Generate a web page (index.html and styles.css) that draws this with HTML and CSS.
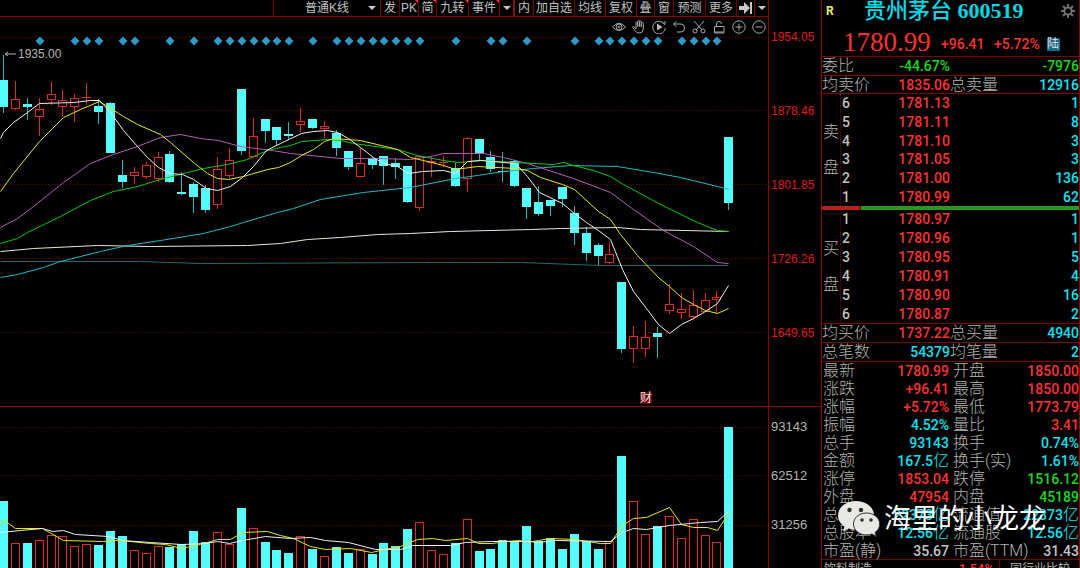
FILE: index.html
```html
<!DOCTYPE html>
<html lang="zh-CN">
<head>
<meta charset="utf-8">
<title>贵州茅台 600519</title>
<link rel="stylesheet" href="styles.css">
</head>
<body>
<div class="app">
  <main class="charts">
    <nav class="toolbar" aria-label="图表工具">
      <label class="period">
        <select aria-label="K线类型"><option>普通K线</option></select>
        <svg class="caret" viewBox="0 0 8 4"><path d="M0 0h8L4 4z"/></svg>
      </label>
      <button>发</button>
      <button class="hot">PK</button>
      <button class="hot">简</button>
      <button class="hot">九转</button>
      <button class="hot">事件</button>
      <button aria-label="更多事件"><svg class="caret" viewBox="0 0 8 4"><path d="M0 0h8L4 4z"/></svg></button>
      <button class="thick">内</button>
      <button>加自选</button>
      <button>均线</button>
      <button>复权</button>
      <button>叠</button>
      <button>窗</button>
      <button>预测</button>
      <button>更多</button>
      <button aria-label="移到最后"><svg class="skip" viewBox="0 0 13 12"><path d="M0 4h5V0l6 6-6 6V8H0zM11 0h2v12h-2z"/></svg></button>
      <button aria-label="展开"><svg class="caret" viewBox="0 0 8 4"><path d="M0 0h8L4 4z"/></svg></button>
    </nav>
    <div class="corner"></div>

    <section class="plot price-plot">
      <svg id="price" class="canvas" viewBox="0 17 768 389" preserveAspectRatio="none" role="img" aria-label="日K线图"></svg>
      <div class="tools">
        <button aria-label="显示"><svg viewBox="0 0 14 14"><path d="M.5 7Q7-.5 13.500 7 7 14 .5 7z"/><circle cx="7" cy="7" r="3"/><circle cx="7" cy="7" r="1"/></svg></button>
        <button aria-label="拖动"><svg viewBox="0 0 14 14"><path d="M4 9V3q0-1 .8-1t.9 1v3.500V1.500q0-1 .9-1t.9 1v5V2q0-1 .9-1t.9 1v5V3.500q0-1 1-1t1 1V9q0 4-4 4-3 0-4-2L.8 7.500Q.5 6.500 1.500 6.500T4 9z"/></svg></button>
        <button aria-label="播放"><svg viewBox="0 0 14 14"><path d="M12.500 4.500A6.300 6.300 0 1 0 13.300 8M10 2l3 2.500V1"/><path class="solid" d="M5 3.500 10.500 7 5 10.500z"/></svg></button>
        <button aria-label="撤销"><svg viewBox="0 0 14 14"><path d="M4.500 1.500 1.500 4l3 3M1.500 4H9q3.500 0 3.500 4T9 12H5"/></svg></button>
        <button aria-label="剪切"><svg viewBox="0 0 14 14"><path d="M2 1l8 9M12 1 4 10"/><circle cx="3" cy="11" r="2"/><circle cx="11" cy="11" r="2"/></svg></button>
        <button aria-label="解锁"><svg viewBox="0 0 14 14"><path d="M2.500 6.500h9.500V13H2.500zM4.500 6.500V4q0-2.500 2.500-2.500T9.500 4M2.500 12h9"/></svg></button>
        <button aria-label="放大"><svg viewBox="0 0 14 14"><circle cx="7" cy="7" r="6.200"/><path d="M3.500 7h7M7 3.500v7"/></svg></button>
        <button aria-label="缩小"><svg viewBox="0 0 14 14"><circle cx="7" cy="7" r="6.200"/><path d="M3.500 7h7"/></svg></button>
      </div>
      <div class="peak"><svg viewBox="0 0 12 6"><path d="M1 3h11M4 1 1 3l3 2"/></svg><span>1935.00</span></div>
      <div class="report">财</div>
    </section>
    <div class="axis price-axis">
      <span>1954.05</span><span>1878.46</span><span>1801.85</span><span>1726.26</span><span>1649.65</span>
    </div>

    <section class="plot">
      <svg id="volume" class="canvas" viewBox="0 407 768 161" preserveAspectRatio="none" role="img" aria-label="成交量"></svg>
    </section>
    <div class="axis volume-axis"><span>93143</span><span>62512</span><span>31256</span></div>
  </main>

  <aside class="quote">
    <header class="head">
      <div class="name">
        <b class="mark">R</b>
        <h1>贵州茅台 <span>600519</span></h1>
        <button aria-label="设置"><svg viewBox="0 0 14 14"><circle cx="7" cy="7" r="3.600"/><path d="M7 0v3M7 11v3M0 7h3M11 7h3M2 2l2.200 2.200M9.800 9.800 12 12M12 2 9.800 4.200M4.200 9.800 2 12"/></svg></button>
      </div>
      <div class="last"><strong>1780.99</strong><span>+96.41</span><span>+5.72%</span><i>陆</i></div>
    </header>
    <dl class="line"><dt>委比</dt><dd class="green">-44.67%</dd><dt></dt><dd class="green">-7976</dd></dl>
    <dl class="line"><dt>均卖价</dt><dd class="red">1835.06</dd><dt>总卖量</dt><dd class="cyan">12916</dd></dl>
    <div class="book">
      <div class="side"><span>卖</span><span>盘</span></div>
      <table>
        <tr><th>6</th><td>1781.13</td><td>1</td></tr>
        <tr><th>5</th><td>1781.11</td><td>8</td></tr>
        <tr><th>4</th><td>1781.10</td><td>3</td></tr>
        <tr><th>3</th><td>1781.05</td><td>3</td></tr>
        <tr><th>2</th><td>1781.00</td><td>136</td></tr>
        <tr><th>1</th><td>1780.99</td><td>62</td></tr>
      </table>
    </div>
    <div class="ratio"><span></span></div>
    <div class="book">
      <div class="side"><span>买</span><span>盘</span></div>
      <table>
        <tr><th>1</th><td>1780.97</td><td>1</td></tr>
        <tr><th>2</th><td>1780.96</td><td>1</td></tr>
        <tr><th>3</th><td>1780.95</td><td>5</td></tr>
        <tr><th>4</th><td>1780.91</td><td>4</td></tr>
        <tr><th>5</th><td>1780.90</td><td>16</td></tr>
        <tr><th>6</th><td>1780.87</td><td>2</td></tr>
      </table>
    </div>
    <dl class="line"><dt>均买价</dt><dd class="red">1737.22</dd><dt>总买量</dt><dd class="cyan">4940</dd></dl>
    <dl class="line"><dt>总笔数</dt><dd class="cyan">54379</dd><dt>均笔量</dt><dd class="cyan">2</dd></dl>
    <div class="stats-wrap">
      <dl class="stats">
        <dt>最新</dt><dd class="red">1780.99</dd><dt>开盘</dt><dd class="red">1850.00</dd>
        <dt>涨跌</dt><dd class="red">+96.41</dd><dt>最高</dt><dd class="red">1850.00</dd>
        <dt>涨幅</dt><dd class="red">+5.72%</dd><dt>最低</dt><dd class="red">1773.79</dd>
        <dt>振幅</dt><dd class="cyan">4.52%</dd><dt>量比</dt><dd class="red">3.41</dd>
        <dt>总手</dt><dd class="cyan">93143</dd><dt>换手</dt><dd class="cyan">0.74%</dd>
        <dt>金额</dt><dd class="cyan">167.5<small>亿</small></dd><dt>换手(实)</dt><dd class="cyan">1.61%</dd>
        <dt>涨停</dt><dd class="red">1853.04</dd><dt>跌停</dt><dd class="green">1516.12</dd>
        <dt>外盘</dt><dd class="red">47954</dd><dt>内盘</dt><dd class="green">45189</dd>
        <dt>总市值</dt><dd class="cyan">22373<small>亿</small></dd><dt>流通值</dt><dd class="cyan">22373<small>亿</small></dd>
        <dt>总股本</dt><dd class="cyan">12.56<small>亿</small></dd><dt>流通股</dt><dd class="cyan">12.56<small>亿</small></dd>
        <dt>市盈(静)</dt><dd>35.67</dd><dt>市盈(TTM)</dt><dd>31.43</dd>
      </dl>
      <div class="watermark">
        <svg viewBox="0 0 42 36">
          <path class="bubble" d="M18 0C8 0 0 6.500 0 14.500c0 4.500 2.500 8.300 6.500 11L5 30.500l5.500-3q3.500 1.300 7.500 1.300c10 0 18-6 18-14.300S28 0 18 0z"/>
          <path class="bubble front" d="M28.500 12C21 12 15.500 17 15.500 23s5.500 11 13 11q3 0 5.500-1l4.200 2.500-1.200-4c3-2 4.700-5 4.700-8.500 0-6-5.700-11-13.200-11z"/>
          <g class="eyes"><circle cx="11.500" cy="9" r="2.200"/><circle cx="23" cy="9" r="2.200"/><circle cx="24" cy="19" r="1.800"/><circle cx="33" cy="19" r="1.800"/></g>
        </svg>
        <span>海里的小龙龙</span>
      </div>
    </div>
    <footer class="sector"><a href="#sector">饮料制造</a><span class="red">1.54%</span><a href="#peers">同行业比较</a></footer>
  </aside>
</div>
<script src="chart.js"></script>
</body>
</html>
```

FILE: styles.css
```css
* { box-sizing: border-box; }
body {
  margin: 0;
  background: #000;
  color: #b4b4ae;
  font-family: "Liberation Sans", "Noto Sans CJK SC", sans-serif;
  font-size: 12px;
}
button, select {
  margin: 0;
  padding: 0;
  border: 0;
  background: none;
  color: inherit;
  font: inherit;
}
.app {
  display: grid;
  grid-template-columns: minmax(0, 1fr) 259px;
  height: 100vh;
  overflow: hidden;
}
.charts {
  display: grid;
  grid-template-columns: minmax(0, 1fr) 53px;
  grid-template-rows: 17px minmax(0, 1fr) 162px;
}
.toolbar {
  display: grid;
  grid-template-columns: 107px 19px 19px 18px 32px 31px 14px 20px 41px 31px 31px 18px 19px 32px 31px 18px 14px;
  justify-content: end;
  border-bottom: 1px solid #8c0000;
  color: #c0c0c0;
  line-height: 14px;
}
.toolbar button, .period {
  position: relative;
  display: flex;
  align-items: center;
  justify-content: center;
  border-left: 1px solid #6e0000;
  overflow: hidden;
}
.toolbar .thick { border-left: 2px solid #8c1010; }
.period { gap: 17px; justify-content: flex-end; padding-right: 4px; }
.period select { appearance: none; width: 46px; }
.hot::after {
  content: "";
  position: absolute;
  top: 0;
  right: 0;
  border-top: 3px solid #ff3030;
  border-left: 3px solid transparent;
}
.caret { width: 8px; height: 4px; fill: #c8c8c8; }
.skip { width: 13px; height: 12px; fill: #c8c8c8; }
.corner, .axis { border-left: 1px solid #8c0000; }
.plot { position: relative; min-height: 0; min-width: 0; }
.canvas { display: block; width: 100%; height: 100%; }
.axis {
  display: flex;
  flex-direction: column;
  padding-left: 2px;
  line-height: 14px;
}
.price-axis { gap: 60px; padding-top: 13px; color: #e01818; }
.volume-axis {
  gap: 35px;
  padding-top: 13px;
  border-top: 1px solid #8c0000;
  font-size: 13px;
}
.price-plot + .axis + .plot { border-top: 1px solid #8c0000; }
.tools {
  position: absolute;
  top: 3px;
  right: 2px;
  display: flex;
  gap: 6px;
}
.tools svg { display: block; width: 14px; height: 14px; fill: none; stroke: #a8a8a8; }
.tools .solid { fill: #b8b8b8; stroke: none; }
.peak {
  position: absolute;
  top: 30px;
  left: 4px;
  display: flex;
  align-items: center;
  gap: 2px;
  line-height: 14px;
}
.peak svg { width: 12px; height: 6px; fill: none; stroke: #b4b4ae; }
.report {
  position: absolute;
  right: 116px;
  bottom: 2px;
  width: 12px;
  height: 12px;
  background: #700000;
  color: #e8e8e8;
  line-height: 12px;
}

/* candles and averages */
.canvas * { vector-effect: non-scaling-stroke; }
.grid { stroke: #780000; stroke-dasharray: 1 2; shape-rendering: crispEdges; }
.up { fill: none; stroke: #e02828; shape-rendering: crispEdges; }
.down { fill: #54fcfc; stroke: none; shape-rendering: crispEdges; }
.wick { fill: #28b4b8; }
.diamond { fill: #2c98c4; }
.ma { fill: none; stroke-width: 1; }
.ma.white { stroke: #f0f0f0; }
.ma.yellow { stroke: #e8e800; }
.ma.purple { stroke: #b858b8; }
.ma.green { stroke: #00cc00; }
.ma.teal { stroke: #18bcc8; }
.ma.ivory { stroke: #e8e8d8; }
.ma.deep { stroke: #246870; }

/* quote panel */
.quote {
  display: grid;
  grid-template-columns: minmax(0, 1fr);
  grid-template-rows: 56px 19px 18px 113px 4px 113px 19px 19px 198px 1fr;
  border-left: 1px solid #8c0000;
  border-right: 1px solid #8c0000;
  font-family: Roboto, "Noto Sans CJK SC", sans-serif;
  font-size: 14px;
  font-weight: 500;
  min-height: 0;
}
.name { display: grid; grid-template-columns: 16px 1fr 16px; line-height: 22px; height: 28px; padding: 0 2px; }
.name button { align-self: start; padding-top: 4px; }
.name .mark { color: #e8f060; font-size: 12px; padding-left: 2px; }
.name h1 {
  margin: 0;
  padding-left: 24px;
  color: #00d8e8;
  font: 500 22px/22px "Liberation Serif", "Noto Sans CJK SC", serif;
  white-space: nowrap;
}
.name h1 span { font-weight: 700; }
.name svg { display: block; width: 14px; height: 14px; fill: none; stroke: #707070; stroke-width: 2; }
.last { display: flex; align-items: center; height: 28px; color: #ff3030; padding-left: 21px; }
.last strong { font: 400 27px/28px "Liberation Serif", serif; width: 98px; }
.last span { width: 53px; padding-top: 4px; }
.last i {
  width: 13px;
  height: 13px;
  margin-top: 4px;
  background: #186888;
  color: #e0e0e0;
  font-size: 12px;
  font-style: normal;
  font-weight: 400;
  line-height: 13px;
}
dl { margin: 0; }
dt { font-size: 16px; font-weight: 300; white-space: nowrap; }
dd { margin: 0; text-align: right; color: #c4c4c4; white-space: nowrap; }
small { font-size: 16px; font-weight: 300; }
.red { color: #ff3030; }
.green { color: #18d818; }
.cyan { color: #10e0f0; }
.line {
  display: grid;
  grid-template-columns: 50px 78px 50px 1fr;
  border-top: 1px solid #780000;
  line-height: 18px;
}
.book { display: grid; grid-template-columns: 19px 1fr; border-top: 1px solid #780000; min-height: 0; }
.ratio + .book { border-top: 0; }
.side {
  display: flex;
  flex-direction: column;
  align-items: center;
  justify-content: center;
  gap: 18px;
  border-right: 1px dotted #780000;
  font-size: 16px;
  font-weight: 300;
  line-height: 18px;
}
.book table { width: 100%; height: 100%; border-collapse: collapse; table-layout: fixed; }
.book th, .book td { padding: 0; line-height: 16px; text-align: right; font-weight: 500; }
.book th { width: 14px; padding-left: 1px; text-align: left; color: #c0c0b8; }
.book td { color: #10e0f0; }
.book th + td { width: 95px; color: #ff3030; }
.ratio { background: #289820; }
.ratio span { display: block; width: 15%; height: 4px; background: #b82020; border-right: 1px solid #500; }
.stats-wrap { position: relative; border-top: 1px solid #780000; }
.stats {
  display: grid;
  grid-template-columns: 50px 76px 64px 1fr;
  grid-auto-rows: 18px;
  line-height: 18px;
  padding-left: 1px;
}
.stats dt:nth-of-type(even) { padding-left: 4px; }
.watermark {
  position: absolute;
  top: 139px;
  left: 16px;
  display: flex;
  align-items: center;
  gap: 4px;
  color: #fff;
  font-size: 27px;
  font-weight: 400;
  line-height: 34px;
  white-space: nowrap;
}
.watermark svg { width: 42px; height: 36px; }
.bubble { fill: #e8e8e4; }
.front { stroke: #303030; }
.eyes { fill: #303030; }
.sector {
  display: grid;
  grid-template-columns: 80px 98px 1fr;
  border-top: 1px solid #780000;
  font-size: 12px;
  line-height: 18px;
  overflow: hidden;
  font-weight: 400;
}
.sector a { color: #b4b4ae; text-decoration: none; padding-left: 2px; }
.sector span { text-align: right; padding-right: 5px; border-right: 1px solid #780000; font-size: 13px; font-weight: 500; }
.sector a:last-child { padding-left: 10px; }
```

FILE: chart.js
```js
// One entry per session: direction, high, body top, body bottom, low, volume bar top.
const sessions = [
  ["d",55,80,107,113,501],["u",81,99,109,110,543],["d",98,104,107,120,543],["u",98,109,117,136,540],
  ["u",82,94,100,105,535],["u",90,100,107,116,536],["u",94,98,107,122,546],["u",83,97,98,105,544],
  ["d",99,106,112,124,545],["d",102,103,153,153,531],["d",160,175,182,188,536],["u",167,172,176,184,550],
  ["u",162,165,177,179,553],["u",152,157,179,182,546],["d",151,154,182,183,547],["d",172,192,194,195,544],
  ["d",182,184,197,213,531],["d",185,188,210,213,542],["u",157,169,205,209,532],["u",148,160,176,178,544],
  ["d",89,89,151,155,508],["u",118,136,157,158,528],["d",119,119,131,143,542],["d",127,127,140,145,550],
  ["d",122,134,136,140,553],["u",108,121,125,132,536],["d",119,119,128,129,549],["u",121,126,129,138,556],
  ["d",130,133,148,156,547],["d",151,151,167,170,553],["u",148,163,177,177,549],["d",157,159,165,169,554],
  ["d",156,156,166,185,543],["d",158,163,167,179,546],["d",166,166,202,203,529],["u",156,156,208,211,522],
  ["u",156,161,163,177,550],["u",156,162,163,167,554],["d",163,168,186,187,543],["u",137,138,179,192,519],
  ["d",139,139,153,160,551],["d",151,157,169,172,549],["d",152,171,172,182,540],["d",160,161,186,187,541],
  ["d",188,188,207,219,526],["d",186,202,214,216,541],["d",200,200,206,216,538],["d",187,187,199,207,549],
  ["d",206,213,233,245,534],["d",227,233,253,261,541],["d",243,245,256,266,549],["u",242,254,263,264,541],
  ["d",282,282,349,353,456],["u",326,336,349,363,501],["u",321,337,349,357,534],["d",327,333,337,358,526],
  ["u",284,304,311,314,516],["u",293,309,313,319,538],["u",290,305,317,320,519],["u",293,300,312,312,535],
  ["u",291,297,300,313,542],["d",137,137,203,210,427]
];
const events = [3,6,7,8,10,11,14,16,18,19,20,21,22,23,24,26,28,29,30,31,32,33,34,35,38,41,42,44,48,50,51,52,53,54,55,57,58,59,60];

const priceLines = {
  deep: "0,261 140,261 200,263 425,262 520,262 600,265 728,265",
  ivory: "0,251 33,248 97,245 150,246 247,245 280,243 307,239 340,237 377,234 410,233 450,231 530,229 560,228 617,227 640,229 728,231",
  teal: "0,277 17,274 43,267 60,261 100,251 127,245 160,240 203,233 230,226 243,222 277,212 293,208 320,199 363,192 410,187 455,178 477,175 503,171 533,168 570,165 617,166 653,172 680,177 717,186 728,189",
  purple: "0,227 17,218 33,206 63,182 90,163 110,155 137,146 160,137 180,134 200,138 218,140 240,146 272,150 290,153 340,158 377,158 410,159 430,156 443,153 483,153 503,157 527,163 573,178 610,192 633,209 663,230 693,246 717,262 728,263",
  green: "0,243 17,238 27,232 60,216 90,200 113,191 137,186 160,179 187,172 203,168 227,164 247,159 253,156 267,150 280,147 290,145 301,141 327,139 340,140 353,143 397,149 417,155 443,160 457,162 483,160 515,162 553,164 563,162 573,165 593,170 610,176 623,184 660,204 697,222 717,230 728,231",
  yellow: "0,191 13,173 39,141 63,117 80,109 99,101 123,116 137,124 160,134 170,142 193,162 207,173 217,178 228,179 243,176 267,169 278,167 290,162 301,155 313,149 324,141 333,138 360,140 397,149 410,157 427,161 443,165 455,169 477,166 515,168 527,170 540,177 562,184 574,189 598,211 610,219 620,234 637,255 658,277 669,286 681,297 693,304 705,310 717,313 728,308",
  white: "0,138 3,132 13,122 27,112 39,103 73,102 90,100 99,100 110,112 123,130 137,146 147,157 158,167 170,173 182,174 193,179 206,188 217,190 230,186 242,177 253,166 266,150 280,143 301,133 313,131 327,130 337,132 348,138 360,147 373,157 383,163 397,166 408,173 422,171 443,170 455,173 467,161 480,160 515,163 527,176 539,192 562,203 574,213 586,222 598,230 610,239 622,269 633,291 646,308 658,324 669,333 681,324 693,318 705,311 717,303 728,285"
};
const volumeLines = {
  yellow: "0,523 4,520 15,528 42,528 63,540 103,541 115,540 130,541 150,543 165,544 181,548 200,544 217,539 230,539 242,532 267,531 280,535 293,538 310,546 325,549 350,548 371,552 385,549 400,546 417,539 432,538 445,540 467,538 478,543 492,543 505,541 520,540 527,542 538,540 550,538 574,539 600,543 610,543 622,525 633,518 646,517 669,507 681,524 693,527 707,527 717,530 728,513",
  white: "0,532 20,530 42,528 52,531 63,530 75,534 108,536 122,540 150,542 181,544 205,543 217,541 229,543 242,540 265,536 290,538 310,537 325,540 348,542 375,549 400,549 412,545 450,545 465,542 490,541 530,541 538,542 555,540 610,541 622,532 633,528 646,529 669,525 700,522 717,521 728,511"
};

const centre = i => Math.round(3 + 11.89 * i);
const grid = ys => ys.map(y => `<path class="grid" d="M0 ${y + 0.5}H768"/>`).join("");
// Averages run through pixel centres so flat stretches stay sharp.
const lines = set => `<g transform="translate(0.5 0.5)">` +
  Object.entries(set).map(([name, points]) => `<polyline class="ma ${name}" points="${points}"/>`).join("") + "</g>";

function box(kind, x, top, bottom) {
  return kind === "d"
    ? `<rect class="down" x="${x - 4}" y="${top}" width="9" height="${Math.max(1, bottom - top)}"/>`
    : `<rect class="up" x="${x - 3.5}" y="${top + 0.5}" width="8" height="${Math.max(0.1, bottom - top - 1)}"/>`;
}

function candle([kind, high, top, bottom, low], i) {
  const x = centre(i);
  const wick = kind === "d"
    ? `<rect class="down wick" x="${x}" y="${high}" width="1" height="${low - high}"/>`
    : `<path class="up" d="M${x + 0.5} ${high}V${top}M${x + 0.5} ${bottom}V${low}"/>`;
  return wick + box(kind, x, top, bottom);
}

document.getElementById("price").innerHTML =
  grid([37, 110, 184, 258, 332]) +
  sessions.map(candle).join("") +
  lines(priceLines) +
  events.map(i => `<path class="diamond" d="M${centre(i) + 1} 36.5l4.500 4.500-4.500 4.500-4.500-4.500z"/>`).join("");

document.getElementById("volume").innerHTML =
  grid([427, 475, 525]) +
  sessions.map((s, i) => box(s[0], centre(i), s[5], 570)).join("") +
  lines(volumeLines);
```
